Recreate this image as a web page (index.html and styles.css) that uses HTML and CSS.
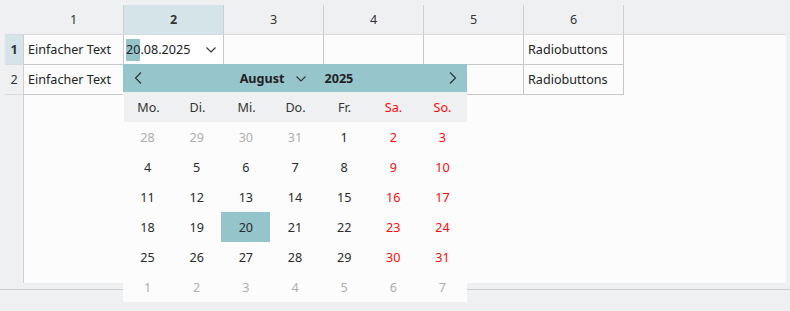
FILE: index.html
```html
<!DOCTYPE html>
<html lang="de">
<head>
  <meta charset="UTF-8">
  <meta name="viewport" content="width=device-width, initial-scale=1.0">
  <title>Tabelle mit Datumsauswahl</title>
  <link rel="stylesheet" href="styles.css">
</head>
<body>
  <div class="sheet">
    <div class="col-headers">
      <div class="corner"></div>
      <div class="col-head">1</div>
      <div class="col-head active">2</div>
      <div class="col-head">3</div>
      <div class="col-head">4</div>
      <div class="col-head">5</div>
      <div class="col-head">6</div>
    </div>

    <div class="body">
      <div class="row-heads">
        <div class="row-head active">1</div>
        <div class="row-head">2</div>
      </div>
      <div class="cells">
        <div class="row">
          <div class="cell">Einfacher Text</div>
          <div class="cell editor">
            <span class="date"><span class="sel">20</span>.08.2025</span>
            <svg class="drop" width="10" height="6" viewBox="0 0 10 6"><path d="M0.5 0.5 L5 5 L9.5 0.5" fill="none" stroke="#333" stroke-width="1.1"/></svg>
          </div>
          <div class="cell"></div>
          <div class="cell"></div>
          <div class="cell"></div>
          <div class="cell">Radiobuttons</div>
        </div>
        <div class="row">
          <div class="cell">Einfacher Text</div>
          <div class="cell"></div>
          <div class="cell"></div>
          <div class="cell"></div>
          <div class="cell"></div>
          <div class="cell">Radiobuttons</div>
        </div>
      </div>
    </div>

    <div class="footer"></div>

    <!-- Datumsauswahl -->
    <div class="picker">
      <div class="picker-head">
        <svg class="nav" width="8" height="12" viewBox="0 0 8 12"><path d="M7 0.5 L1.5 6 L7 11.5" fill="none" stroke="#333" stroke-width="1.2"/></svg>
        <div class="month-year">
          <span>August</span>
          <svg width="10" height="6" viewBox="0 0 10 6"><path d="M0.5 0.5 L5 5 L9.5 0.5" fill="none" stroke="#333" stroke-width="1.1"/></svg>
          <span class="year">2025</span>
        </div>
        <svg class="nav" width="8" height="12" viewBox="0 0 8 12"><path d="M1 0.5 L6.5 6 L1 11.5" fill="none" stroke="#333" stroke-width="1.2"/></svg>
      </div>
      <div class="weekdays">
        <span>Mo.</span><span>Di.</span><span>Mi.</span><span>Do.</span><span>Fr.</span><span class="we">Sa.</span><span class="we">So.</span>
      </div>
      <div class="days">
        <span class="other">28</span><span class="other">29</span><span class="other">30</span><span class="other">31</span><span>1</span><span class="we">2</span><span class="we">3</span>
        <span>4</span><span>5</span><span>6</span><span>7</span><span>8</span><span class="we">9</span><span class="we">10</span>
        <span>11</span><span>12</span><span>13</span><span>14</span><span>15</span><span class="we">16</span><span class="we">17</span>
        <span>18</span><span>19</span><span class="today">20</span><span>21</span><span>22</span><span class="we">23</span><span class="we">24</span>
        <span>25</span><span>26</span><span>27</span><span>28</span><span>29</span><span class="we">30</span><span class="we">31</span>
        <span class="other">1</span><span class="other">2</span><span class="other">3</span><span class="other">4</span><span class="other">5</span><span class="other">6</span><span class="other">7</span>
      </div>
    </div>
  </div>
</body>
</html>
```

FILE: styles.css
```css
body {
  margin: 0;
  background-color: #eff0f2;
  font-family: "Noto Sans", "Open Sans", sans-serif;
  font-size: 12.6px;
  color: #333;
}
.sheet {
  position: relative;
  height: 311px;
  padding: 5px 0 0 5px;
  box-sizing: border-box;
}
.col-headers {
  display: flex;
  height: 29px;
  border-bottom: 1px solid #d9dadc;
  margin-right: 4px;
}
.corner {
  width: 19px;
}
.col-head {
  width: 99px;
  border-right: 1px solid #cfcfcf;
  display: flex;
  align-items: center;
  justify-content: center;
}
.col-head.active {
  background-color: #d5e4e8;
  font-weight: bold;
}
.body {
  display: flex;
  height: 248px;
}
.row-heads {
  width: 18px;
}
.row-head {
  height: 29px;
  border-bottom: 1px solid #d9dadc;
  display: flex;
  align-items: center;
  justify-content: center;
}
.row-head.active {
  background-color: #d5e4e8;
  font-weight: bold;
}
.cells {
  width: 762px;
  background-color: #fcfcfc;
  border-left: 1px solid #cfcfcf;
}
.row {
  display: flex;
}
.cell {
  width: 95px;
  height: 29px;
  padding-left: 4px;
  border-right: 1px solid #c8c8c8;
  border-bottom: 1px solid #c8c8c8;
  display: flex;
  align-items: center;
  color: #222;
}
.cell.editor {
  background-color: #fff;
  padding-left: 2px;
  width: 97px;
  justify-content: space-between;
}
.sel {
  background-color: #96c4cb;
  display: inline-block;
  line-height: 22px;
}
.drop {
  margin-right: 7px;
}
.footer {
  margin-top: 6px;
  margin-left: -5px;
  border-top: 1px solid #c9cacc;
}
.picker {
  position: absolute;
  left: 123px;
  top: 64px;
  width: 344px;
  background-color: #fcfcfc;
}
.picker-head {
  height: 28px;
  background-color: #96c5cc;
  display: flex;
  align-items: center;
  justify-content: space-between;
  padding: 0 10px 0 11px;
}
.month-year {
  display: flex;
  align-items: center;
  font-weight: bold;
  color: #222;
  margin-left: 2px;
}
.month-year svg {
  margin: 2px 19px 0 11px;
}
.weekdays,
.days {
  display: grid;
  grid-template-columns: repeat(7, 1fr);
}
.weekdays {
  height: 30px;
  background-color: #eff0f2;
  margin-left: 1px;
}
.weekdays span,
.days span {
  display: flex;
  align-items: center;
  justify-content: center;
  height: 30px;
}
.weekdays span {
  color: #333;
}
.days span {
  color: #2a2a2a;
}
.weekdays .we,
.days .we {
  color: #ff0a0a;
}
.days .other {
  color: #aeaeae;
}
.days .today {
  background-color: #96c4cb;
}
```
